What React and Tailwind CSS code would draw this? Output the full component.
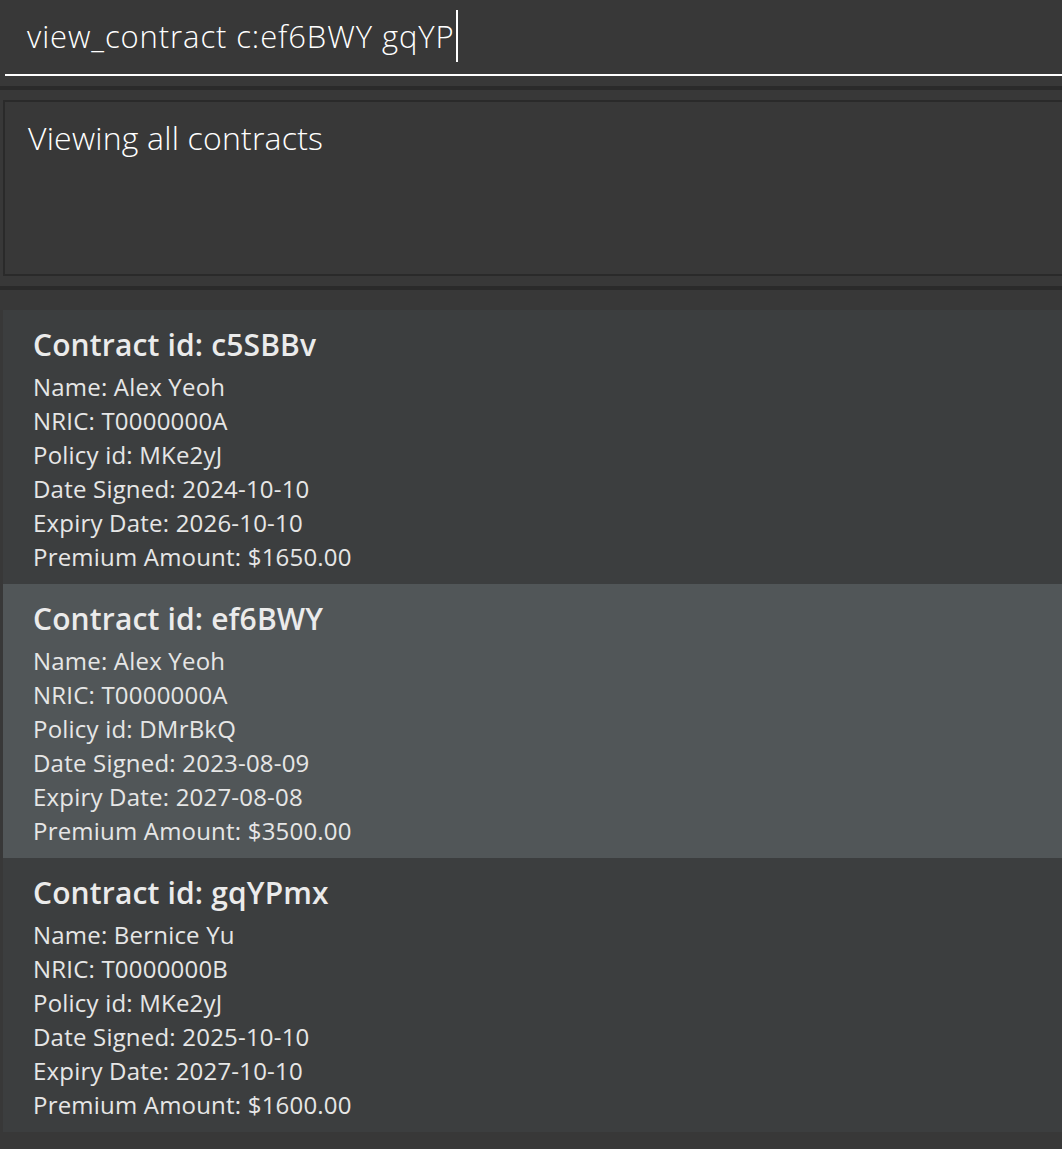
import React from 'react';

const contracts = [
  {
    id: 'c5SBBv',
    name: 'Alex Yeoh',
    nric: 'T0000000A',
    policy: 'MKe2yJ',
    signed: '2024-10-10',
    expiry: '2026-10-10',
    premium: '$1650.00',
  },
  {
    id: 'ef6BWY',
    name: 'Alex Yeoh',
    nric: 'T0000000A',
    policy: 'DMrBkQ',
    signed: '2023-08-09',
    expiry: '2027-08-08',
    premium: '$3500.00',
  },
  {
    id: 'gqYPmx',
    name: 'Bernice Yu',
    nric: 'T0000000B',
    policy: 'MKe2yJ',
    signed: '2025-10-10',
    expiry: '2027-10-10',
    premium: '$1600.00',
  },
];

const font = { fontFamily: '"Open Sans", "Noto Sans", sans-serif' };

function ContractCard({ contract, odd }) {
  return (
    <div
      className={`h-[274px] pt-[15px] pl-[30px] ${odd ? 'bg-[#515658]' : 'bg-[#3c3e3f]'}`}
    >
      <div className="text-[30px] leading-[40px] font-semibold tracking-[0.15px] text-[#ebebeb] mb-[5px]">
        Contract id: {contract.id}
      </div>
      <div className="text-[24px] leading-[34px] tracking-[0.2px] text-[#e6e6e6]">
        <div>Name: {contract.name}</div>
        <div>NRIC: {contract.nric}</div>
        <div>Policy id: {contract.policy}</div>
        <div>Date Signed: {contract.signed}</div>
        <div>Expiry Date: {contract.expiry}</div>
        <div>Premium Amount: {contract.premium}</div>
      </div>
    </div>
  );
}

export default function App() {
  return (
    <div className="w-[1062px] h-[1149px] bg-[#383838] overflow-hidden" style={font}>
      {/* command box */}
      <div className="h-[86px] pl-[5px]">
        <div className="h-[76px] border-b-2 border-white pt-[15px] pl-[22px]">
          <div className="flex items-start text-[31px] leading-[42px] font-light tracking-[0.9px] text-white">
            <span>view_contract c:ef6BWY gqYP</span>
            <span className="inline-block w-[2px] h-[52px] -mt-[5px] ml-[1px] bg-white" />
          </div>
        </div>
      </div>
      <div className="h-[4px] bg-[#2a2a2a]" />

      {/* result display */}
      <div className="py-[10px] pl-[3px]">
        <div className="h-[176px] border-2 border-r-0 border-[#2a2a2a] pt-[14px] pl-[23px]">
          <div className="text-[32px] leading-[44px] font-light tracking-[0.2px] text-white">
            Viewing all contracts
          </div>
        </div>
      </div>
      <div className="h-[4px] bg-[#2a2a2a]" />

      {/* contract list */}
      <div className="pt-[20px] pl-[3px]">
        {contracts.map((c, i) => (
          <ContractCard key={c.id} contract={c} odd={i % 2 === 1} />
        ))}
      </div>
    </div>
  );
}
